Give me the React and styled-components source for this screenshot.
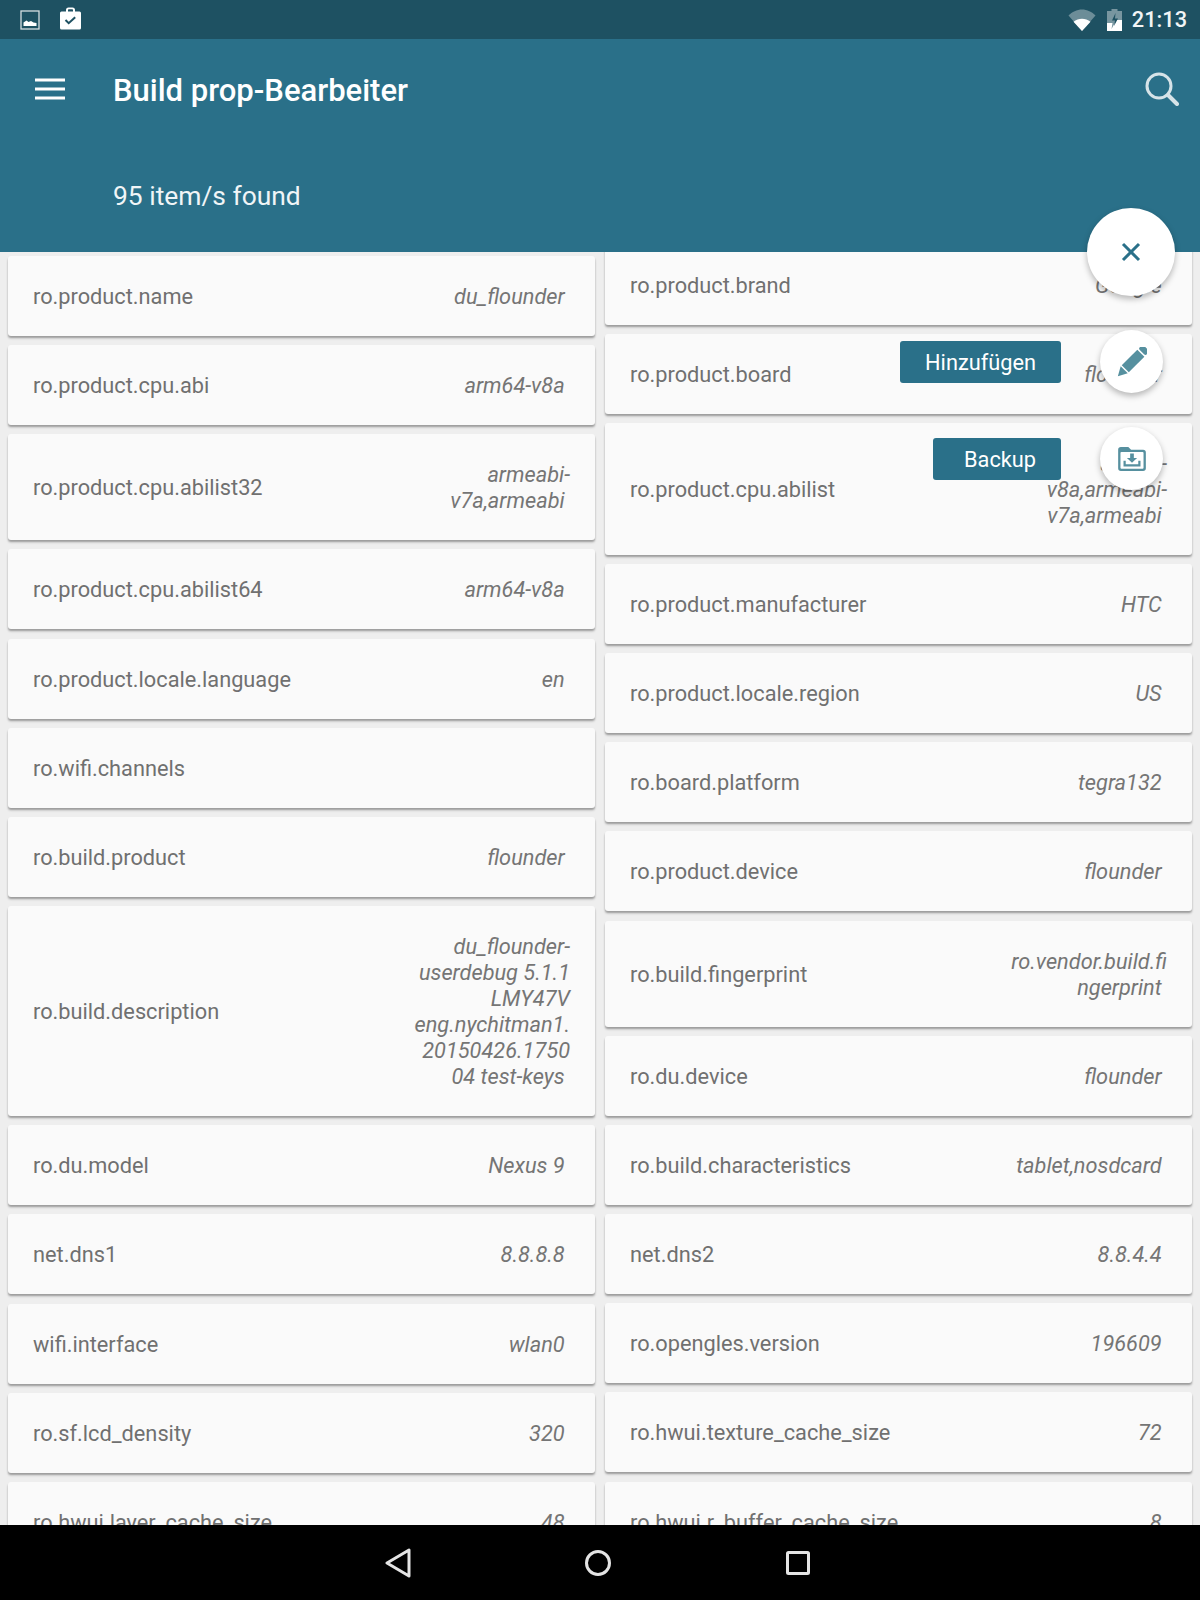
import React from 'react'
import styled, { createGlobalStyle } from 'styled-components'

const TEAL = '#2a7089'
const TEAL_DARK = '#1e5162'
const TEAL_SOFT = '#56909f'

const leftItems = [
  ['ro.product.name', 'du_flounder'],
  ['ro.product.cpu.abi', 'arm64-v8a'],
  ['ro.product.cpu.abilist32', 'armeabi-v7a,armeabi'],
  ['ro.product.cpu.abilist64', 'arm64-v8a'],
  ['ro.product.locale.language', 'en'],
  ['ro.wifi.channels', ''],
  ['ro.build.product', 'flounder'],
  ['ro.build.description', 'du_flounder-userdebug 5.1.1 LMY47V eng.nychitman1.20150426.175004 test-keys'],
  ['ro.du.model', 'Nexus 9'],
  ['net.dns1', '8.8.8.8'],
  ['wifi.interface', 'wlan0'],
  ['ro.sf.lcd_density', '320'],
  ['ro.hwui.layer_cache_size', '48'],
]

const rightItems = [
  ['ro.product.brand', 'Google'],
  ['ro.product.board', 'flounder'],
  ['ro.product.cpu.abilist', 'arm64-v8a,armeabi-v7a,armeabi'],
  ['ro.product.manufacturer', 'HTC'],
  ['ro.product.locale.region', 'US'],
  ['ro.board.platform', 'tegra132'],
  ['ro.product.device', 'flounder'],
  ['ro.build.fingerprint', 'ro.vendor.build.fingerprint'],
  ['ro.du.device', 'flounder'],
  ['ro.build.characteristics', 'tablet,nosdcard'],
  ['net.dns2', '8.8.4.4'],
  ['ro.opengles.version', '196609'],
  ['ro.hwui.texture_cache_size', '72'],
  ['ro.hwui.r_buffer_cache_size', '8'],
]

function App() {
  return (
    <Screen>
      <GlobalStyle />
      <Header>
        <StatusBar>
          <StatusGroup $gap={19}>
            <svg width="20" height="20" viewBox="0 0 20 20">
              <rect x="1" y="1" width="18" height="18" fill="none" stroke="#d5dde0" strokeWidth="1.3" />
              <path d="M3.5 16v-3.5l3-2 2 1.5 2.5-1 2.5 1.5 3 .5V16z" fill="#fff" />
            </svg>
            <BagIcon width="23" height="23" viewBox="0 0 23 23">
              <path d="M2.5 4.5H7V3a2.5 2.5 0 0 1 2.5-2.5h4A2.5 2.5 0 0 1 16 3v1.5h4.5A1.5 1.5 0 0 1 22 6v15a1.5 1.5 0 0 1-1.5 1.5h-18A1.5 1.5 0 0 1 1 21V6a1.5 1.5 0 0 1 1.5-1.5zM9 4.5h5V3a.7.7 0 0 0-.7-.7H9.700A.7.7 0 0 0 9 3z" fill="#fff" fillRule="evenodd" />
              <path d="M6.500 13l3.200 3.200 6.500-6" fill="none" stroke={TEAL_DARK} strokeWidth="2" />
            </BagIcon>
          </StatusGroup>
          <StatusGroup $gap={11}>
            <svg width="28" height="22" viewBox="0 0 28 22">
              <path d="M0.500 6.500C4 3 9 0.500 14 0.500s10 2.500 13.500 6L14 22z" fill="#fff" fillOpacity="0.35" />
              <path d="M5.500 12.700C8 10.700 11 9.700 14 9.700s6 1 8.500 3L14 22z" fill="#fff" />
            </svg>
            <BatteryIcon width="15" height="22" viewBox="0 0 15 22">
              <path d="M4.500 0h6v2H15v20H0V2h4.500z" fill="#fff" fillOpacity="0.4" />
              <path d="M0 14h5.500L4.500 20 9.500 11H15v11H0z" fill="#fff" />
              <path d="M8.500 4 5 11.500h3L7 17l4-7.500H8z" fill={TEAL_DARK} />
            </BatteryIcon>
            <Clock>21:13</Clock>
          </StatusGroup>
        </StatusBar>
        <Toolbar>
          <svg width="30" height="22" viewBox="0 0 30 22">
            <path d="M0 2h30M0 11h30M0 20h30" stroke="#fff" strokeWidth="3" />
          </svg>
          <Title>Build prop-Bearbeiter</Title>
          <SearchIcon width="34" height="34" viewBox="0 0 34 34">
            <circle cx="14" cy="14" r="12" fill="none" stroke="#d6e3e8" strokeWidth="3" />
            <path d="M23 23l9 9" stroke="#d6e3e8" strokeWidth="4" strokeLinecap="round" />
          </SearchIcon>
        </Toolbar>
        <Subtitle>95 item/s found</Subtitle>
      </Header>

      <ListArea>
        <Column>
          {leftItems.map(([name, value]) => (
            <PropCard key={name}>
              <PropName>{name}</PropName>
              <PropValue>{value && value + '\u00a0'}</PropValue>
            </PropCard>
          ))}
        </Column>
        <Column $shift={-11.5}>
          {rightItems.map(([name, value]) => (
            <PropCard key={name}>
              <PropName>{name}</PropName>
              <PropValue>{value + '\u00a0'}</PropValue>
            </PropCard>
          ))}
        </Column>
      </ListArea>

      <FabMenu>
        <MainFab>
          <svg width="20" height="20" viewBox="0 0 20 20">
            <path d="M2 2l16 16M18 2L2 18" stroke={TEAL} strokeWidth="3" />
          </svg>
        </MainFab>
        <FabRow>
          <FabLabel>Hinzufügen</FabLabel>
          <MiniFab>
            <svg width="30" height="30" viewBox="0 0 30 30">
              <g transform="rotate(45 15 15)">
                <rect x="10" y="-5" width="10" height="6" rx="2" fill={TEAL_SOFT} />
                <rect x="10" y="2.500" width="10" height="22" fill={TEAL_SOFT} />
                <path d="M10 26h10l-5 9z" fill={TEAL_SOFT} />
              </g>
            </svg>
          </MiniFab>
        </FabRow>
        <FabRow>
          <FabLabel>Backup</FabLabel>
          <MiniFab>
            <svg width="28" height="24" viewBox="0 0 30 26">
              <path d="M3 0h8l3 3h13a3 3 0 0 1 3 3v17a3 3 0 0 1-3 3H3a3 3 0 0 1-3-3V3a3 3 0 0 1 3-3z" fill={TEAL_SOFT} />
              <rect x="2.500" y="5.500" width="25" height="18" rx="1" fill="#fff" />
              <path d="M13 7h4v5h3.500L15 17l-5.500-5H13z" fill={TEAL_SOFT} />
              <path d="M7 15v5h16v-5" fill="none" stroke={TEAL_SOFT} strokeWidth="2.400" />
            </svg>
          </MiniFab>
        </FabRow>
      </FabMenu>

      <NavBar>
        <NavSlot>
          <svg width="26" height="30" viewBox="0 0 26 30">
            <path d="M24 2v26L2 15z" fill="none" stroke="#e4e4e4" strokeWidth="3" strokeLinejoin="round" />
          </svg>
        </NavSlot>
        <NavSlot>
          <svg width="26" height="26" viewBox="0 0 26 26">
            <circle cx="13" cy="13" r="11.500" fill="none" stroke="#e4e4e4" strokeWidth="3" />
          </svg>
        </NavSlot>
        <NavSlot>
          <svg width="24" height="24" viewBox="0 0 24 24">
            <rect x="1.500" y="1.500" width="21" height="21" rx="1" fill="none" stroke="#e4e4e4" strokeWidth="3" />
          </svg>
        </NavSlot>
      </NavBar>
    </Screen>
  )
}

export default App

const GlobalStyle = createGlobalStyle`
  html, body {
    margin: 0;
    padding: 0;
    background: #eeeeee;
    font-family: Roboto, "Liberation Sans", sans-serif;
  }
`
const Screen = styled.div`
  position: relative;
  width: 1200px;
  height: 1600px;
  display: flex;
  flex-direction: column;
  overflow: hidden;
  background: #eeeeee;
`
const Header = styled.header`
  position: relative;
  z-index: 1;
  flex: none;
  height: 252px;
  background: ${TEAL};
  color: #fff;
`
const StatusBar = styled.div`
  height: 39px;
  background: ${TEAL_DARK};
  display: flex;
  align-items: center;
  justify-content: space-between;
  padding: 0 13px 0 20px;
`
const StatusGroup = styled.div`
  display: flex;
  align-items: center;
  gap: ${props => props.$gap}px;
`
const BagIcon = styled.svg`
  margin-bottom: 2px;
`
const BatteryIcon = styled.svg`
  margin-right: -1px;
`
const Clock = styled.span`
  font-size: 21.75px;
  font-weight: 500;
  color: #f2f5f6;
`
const Toolbar = styled.div`
  height: 100px;
  display: flex;
  align-items: center;
  padding: 0 21px 0 35px;
`
const Title = styled.h1`
  flex: 1;
  margin: 2px 0 0 48px;
  font-size: 31px;
  font-weight: 500;
`
const SearchIcon = styled.svg`
  flex: none;
`
const Subtitle = styled.div`
  padding: 40px 0 0 113px;
  font-size: 26.4px;
  line-height: 34px;
  color: #f0f5f7;
`
const ListArea = styled.main`
  flex: 1;
  min-height: 0;
  overflow: hidden;
  display: flex;
  gap: 10px;
  padding: 4px 8px 0;
`
const Column = styled.div`
  flex: 1;
  min-width: 0;
  display: flex;
  flex-direction: column;
  gap: 9.17px;
  margin-top: ${props => props.$shift || 0}px;
`
const PropCard = styled.div`
  flex: none;
  display: flex;
  align-items: center;
  justify-content: space-between;
  gap: 16px;
  padding: 28px 25px 26px;
  min-height: 26px;
  background: #fafafa;
  border-radius: 3px;
  box-shadow: 0 2px 2px rgba(0, 0, 0, 0.3), 0 3px 3px rgba(0, 0, 0, 0.06);
  font-size: 21.75px;
  line-height: 26px;
  color: #707070;
`
const PropName = styled.span`
  white-space: nowrap;
`
const PropValue = styled.span`
  width: 159px;
  flex: none;
  text-align: right;
  font-style: italic;
  overflow-wrap: anywhere;
  color: #757575;
`
const FabMenu = styled.div`
  position: absolute;
  z-index: 2;
  top: 208px;
  right: 25px;
  display: flex;
  flex-direction: column;
  align-items: flex-end;
  gap: 34px;
`
const MainFab = styled.button`
  width: 88px;
  height: 88px;
  border: 0;
  padding: 0;
  border-radius: 50%;
  background: #fff;
  display: flex;
  align-items: center;
  justify-content: center;
  box-shadow: 0 3px 6px rgba(0, 0, 0, 0.28);
`
const FabRow = styled.div`
  display: flex;
  align-items: center;
  gap: 39px;
  padding-right: 12px;
`
const FabLabel = styled.span`
  min-width: 78px;
  padding: 1px 25px 0;
  height: 41px;
  line-height: 41px;
  text-align: right;
  font-size: 21.75px;
  color: #fff;
  background: ${TEAL};
  border-radius: 3px;
`
const MiniFab = styled.button`
  width: 63px;
  height: 63px;
  border: 0;
  padding: 0;
  border-radius: 50%;
  background: #fff;
  display: flex;
  align-items: center;
  justify-content: center;
  box-shadow: 0 3px 6px rgba(0, 0, 0, 0.28);
`
const NavBar = styled.nav`
  position: relative;
  z-index: 1;
  flex: none;
  height: 75px;
  padding-right: 5px;
  background: #000;
  display: flex;
  align-items: center;
  justify-content: center;
`
const NavSlot = styled.div`
  width: 200px;
  display: flex;
  justify-content: center;
`
